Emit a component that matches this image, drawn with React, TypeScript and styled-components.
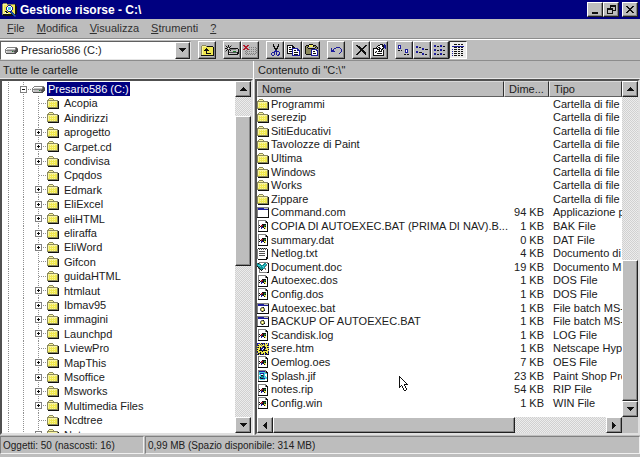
import React from 'react';
import styled, { createGlobalStyle, css } from 'styled-components';

const face = '#bdbdbd';
const navy = '#000080';
const ink = '#202020';

const GlobalStyle = createGlobalStyle`
  *, *::before, *::after { box-sizing: border-box; }
  html, body, #root { height: 100%; margin: 0; }
  body { background: ${face}; color: ${ink}; overflow: hidden; }
  body, button, select, table {
    font-family: "Liberation Sans", Arial, sans-serif;
    font-size: 11px;
    line-height: 13px;
  }
`;

const raised = css`
  border: 1px solid;
  border-color: #fff #202020 #202020 #fff;
  box-shadow: inset -1px -1px 0 #868686;
`;

const dither = css`
  background: repeating-conic-gradient(#d0d0d0 0 25%, #ececec 0 50%) 0 0 / 2px 2px;
`;

/* ---------- pixel icons ---------- */

const palette: Record<string, string> = {
  k: '#101010', g: '#808080', s: '#c0c0c0', w: '#ffffff', y: '#f0e850',
  o: '#8c8a5c', b: '#1c1c9c', r: '#b01c2c', t: '#109090', c: '#40d0e0',
  n: '#208030', l: '#f8f4a0', d: '#505050', e: '#e4e4e4',
};

const Glyph = styled.svg`
  display: block;
  flex: none;
`;

function Pixels({ rows }: { rows: string[] }) {
  const width = Math.max(...rows.map((r) => r.length));
  const cells: React.ReactNode[] = [];
  rows.forEach((row, y) => {
    let x = 0;
    while (x < row.length) {
      const ch = row[x];
      let end = x + 1;
      while (end < row.length && row[end] === ch) end++;
      if (palette[ch]) {
        cells.push(<rect key={`${x}-${y}`} x={x} y={y} width={end - x} height={1} fill={palette[ch]} />);
      }
      x = end;
    }
  });
  return (
    <Glyph width={width} height={rows.length} viewBox={`0 0 ${width} ${rows.length}`} shapeRendering="crispEdges" aria-hidden="true">
      {cells}
    </Glyph>
  );
}

const art = {
  folder: [
    '..oooo......',
    '.ollllo.....',
    'oooooooooog.',
    'olllllllllok',
    'olylylylyyok',
    'olyyyyyyyyok',
    'olylylylyyok',
    'olyyyyyyyyok',
    'oyylylylyyok',
    'oooooooooook',
    '.kkkkkkkkkkk',
  ],
  drive: [
    '..gggggggggg.',
    '.gwwwwwwwwgdg',
    'gwssssssssgdd',
    'ggggggggggddd',
    'gesssssngdddd',
    'gssssssssgdd.',
    '.dddddddddd..',
  ],
  com: [
    'gggggggggggg',
    'gbbbbbbssssk',
    'gbbbbbbbbbbk',
    'gwwwwwwwwwwk',
    'gwwwwwwwwwwk',
    'gwwwwwwwwwwk',
    'gwwwwwwwwwwk',
    'gwwwwwwwwwwk',
    'gwwwwwwwwwwk',
    'gwwwwwwwwwwk',
    'kkkkkkkkkkkk',
  ],
  bat: [
    'gggggggggggg',
    'gbbbbbbssssk',
    'gbbbbbbbbbbk',
    'gwwwwwwwwwwk',
    'gwwwgdkwwwwk',
    'gwwgoyogwwwk',
    'gwwdywydwwwk',
    'gwwgoyokwwwk',
    'gwwwgkgwwwwk',
    'gwwwwwwwwwwk',
    'kkkkkkkkkkkk',
  ],
  unknown: [
    '.gggggggg..',
    '.gwwwwwwgk.',
    '.gwwwwwwgkk',
    '.gwwwwwwwwk',
    '.gwwwkkkkwk',
    '.gkwrrknnwk',
    '.gwkrkknkwk',
    '.gkwbbkyywk',
    '.gwwbwwkywk',
    '.gwwwwwwwwk',
    '.gwwwwwwwwk',
    '.kkkkkkkkkk',
  ],
  text: [
    '.kgkgkgkgk.',
    'gwdwdwdwdwk',
    'gwwwwwwwwwk',
    'gwddddddwwk',
    'gwwwwwwwwwk',
    'gwddddddwwk',
    'gwwwwwwwwwk',
    'gwddddddwwk',
    'gwwwwwwwwwk',
    'gwwwwwwwwkk',
    'gwwwwwwwwkk',
    '.kkkkkkkkk.',
  ],
  word: [
    '..ggggggggg.',
    'tkgwwwwttwgk',
    'ttttwwttctwk',
    'tccttttctgwk',
    'kttctcctgwwk',
    '.kttttctwwwk',
    '.gkttttggwwk',
    '..gktkwwgwwk',
    '..gwkwwwwwwk',
    '..gwwwwwwwwk',
    '..ggggggggkk',
  ],
  html: [
    'bbbykbbkybyb',
    'byybykybyyyb',
    'bkyyoyyoyykb',
    'yyyyyokkyyyy',
    'bkykybbkkykb',
    'yyykbbwkbyyy',
    'kyykbwbkyyyk',
    'yykkkbkkkkyy',
    'kyyyykyyyyyb',
    'byykyyyykyyk',
    'ykbkyykybkyb',
    'bkykbkbykbkk',
  ],
  image: [
    '.gggggggg..',
    '.gbbbbbbgk.',
    '.gccccccgkk',
    '.gcbbbbccck',
    '.gccwwtcwwk',
    '.gwckktcwwk',
    '.gccttbccwk',
    '.gcktttccck',
    '.gcbkkbbcck',
    '.gwcccccwwk',
    '.gwwwwwwwwk',
    '.kkkkkkkkkk',
  ],
  app: [
    '.oooo..........',
    'ollllooooooook.',
    'olyyyybbbyyyyk.',
    'olyyybwwwbyyykk',
    'olyybwcccwbyykk',
    'olyybwcccwbyykk',
    'olyybwcccwbyykk',
    'olyyybwwwbyyykk',
    'olykkybbbbyyykk',
    'olywkkyybtbyykk',
    'ollllwyyybtbykk',
    'okkkkkkkkkbtbk.',
    '.kkkkkkkkkkbtb.',
    '............bb.',
  ],
  up: [
    '.oooo........',
    'ollllokkkkkk.',
    'olyyyyyyyyyyk',
    'olyyykyyyyyyk',
    'olyykkkyyyyyk',
    'olykkkkkyyyyk',
    'olyyykyyyyyyk',
    'olyyykyyyyyyk',
    'olyyykkkkkyyk',
    'olyyyyyyyyyyk',
    'kkkkkkkkkkkkk',
  ],
  map: [
    'g..k..g.......',
    '.k.k.k........',
    '..kgk.........',
    'kkgwgkkkkkkkk.',
    '..kgkggggggssk',
    '.k.k.ksssssssk',
    'g..kssssnnnssk',
    '...kddddddddkk',
    '...kwssssssskk',
    '...kkkkkkkkkk.',
  ],
  unmap: [
    'rr..rr........',
    '.rrrr.........',
    '..rr..g.g.g.g.',
    '.rrrr........g',
    'rr..rrg.g.g.g.',
    '...g.........g',
    '..g.g.g.g.g.g.',
    '...g.........g',
    '..g.g.g.g.g.g.',
    '...g.g.g.g.g..',
  ],
  cut: [
    '..k....k.',
    '..k....k.',
    '..kk..kk.',
    '...k..k..',
    '...kkkk..',
    '....kk...',
    '....bb...',
    '...bbbbb.',
    '.bbb.b..b',
    'b..b.b..b',
    'b..b.b.bb',
    '.bb...bb.',
  ],
  copy: [
    'kkkkkk.......',
    'kwwwwkk......',
    'kwkkwkkk.....',
    'kwwwwbbbbbb..',
    'kwkkkbwwwwbb.',
    'kwwwwbwkkwbbb',
    'kwkkkbwwwwwwb',
    'kwwwwbwkkkkwb',
    'kkkkkbwwwwwwb',
    '.....bwkkkkwb',
    '.....bbbbbbbb',
  ],
  paste: [
    '....kkkk.....',
    '.kkklyylkkk..',
    'kookyyyykook.',
    'kokssssssskok',
    'kookkkkkkkook',
    'kooooobbbbbb.',
    'kooooobwwwwbb',
    'kooooobwkkwwb',
    'kooooobwwwwwb',
    'kooooobwkkkwb',
    '.kkkkkbwwwwwb',
    '......bbbbbbb',
  ],
  undo: [
    '.....bbbb..',
    'b..bb....b.',
    'b.b.......b',
    'bbb.......b',
    'bbbb......b',
    '.........b.',
    '........b..',
  ],
  remove: [
    'kk.......kk',
    '.kkk....kk.',
    '..kkk..kk..',
    '...kkkkk...',
    '....kkk....',
    '....kkkk...',
    '...kk.kkk..',
    '..kk...kkk.',
    '.kk.....kk.',
    'kk.......k.',
  ],
  props: [
    '.......kkk.b.',
    '.....kkwwkkbb',
    '....kwwwwkkbb',
    '...kwkkwwwkbb',
    'kkkkkwkkwkk.b',
    'kwwwkkkwkk...',
    'kwwwwwkwkwk..',
    'kwskwkkkkwk..',
    'kwkswwwwwwk..',
    'kwwwkkkkkwk..',
    'kwwwwwwwwwk..',
    'kkkkkkkkkkk..',
  ],
  large: [
    'bbb.........',
    'bwb.........',
    'bwb.........',
    'bbb.........',
    '.......bbb..',
    'kk.k...bwb..',
    '.......bwb..',
    '.......bbb..',
    '............',
    '......kk.kk.',
  ],
  small: [
    'bb..........',
    'bb.kk.......',
    '......bb....',
    '......bb.kkk',
    '............',
    'bb..........',
    'bb.kkk......',
    '......bb....',
    '......bb.kk.',
  ],
  list: [
    'bb....bb....',
    'bb.kk.bb.kk.',
    '............',
    '............',
    'bb....bb....',
    'bb.kk.bb.kk.',
    '............',
    '............',
    'bb....bb....',
    'bb.kk.bb.kk.',
  ],
  details: [
    '..kkk.kk.kk.',
    '............',
    'bbbbbbbbbbbb',
    '..kkk.kk.kk.',
    '............',
    'b.kkk.kk.kk.',
    '............',
    'b.kkk.kk.kk.',
    '............',
    'b.kkk.kk.kk.',
    '............',
    'b.kkk.kk.kk.',
  ],
  arrowUp: ['...k...', '..kkk..', '.kkkkk.', 'kkkkkkk'],
  arrowDown: ['kkkkkkk', '.kkkkk.', '..kkk..', '...k...'],
  arrowLeft: ['...k', '..kk', '.kkk', 'kkkk', '.kkk', '..kk', '...k'],
  arrowRight: ['k...', 'kk..', 'kkk.', 'kkkk', 'kkk.', 'kk..', 'k...'],
  minimize: ['.......', '.......', '.......', '.......', '.......', '.......', 'kkkkkk.', 'kkkkkk.'],
  restore: [
    '...kkkkkk',
    '...kkkkkk',
    '...k....k',
    'kkkkkk..k',
    'kkkkkk..k',
    'k....kkkk',
    'k....k...',
    'k....k...',
    'kkkkkk...',
  ],
  close: ['kk....kk', '.kk..kk.', '..kkkk..', '...kk...', '..kkkk..', '.kk..kk.', 'kk....kk'],
  plus: [
    'ggggggg',
    'gwwwwwg',
    'gwwkwwg',
    'gwkkkwg',
    'gwwkwwg',
    'gwwwwwg',
    'ggggggg',
  ],
  minus: [
    'ggggggg',
    'gwwwwwg',
    'gwwwwwg',
    'gwkkkwg',
    'gwwwwwg',
    'gwwwwwg',
    'ggggggg',
  ],
  pointer: [
    'k........',
    'kk.......',
    'kwk......',
    'kwwk.....',
    'kwwwk....',
    'kwwwwk...',
    'kwwwwwk..',
    'kwwwwwwk.',
    'kwwwwkkkk',
    'kwkwwk...',
    'kk.kwwk..',
    'k..kwwk..',
    '....kwwk.',
    '....kwwk.',
    '.....kk..',
  ],
};

type IconName = keyof typeof art;
const Icon = ({ name }: { name: IconName }) => <Pixels rows={art[name]} />;

/* ---------- frame ---------- */

const Window = styled.div`
  display: flex;
  flex-direction: column;
  height: 100%;
  background: ${face};
`;

const TitleBar = styled.header`
  display: flex;
  align-items: center;
  height: 19px;
  padding: 0 2px;
  background: ${navy};
  color: #fff;
`;

const Title = styled.h1`
  flex: 1;
  margin: 0 0 0 3px;
  font-size: 12px;
  line-height: 16px;
  font-weight: 700;
`;

const CaptionButton = styled.button<{ $apart?: boolean }>`
  ${raised}
  display: grid;
  place-items: center;
  width: 16px;
  height: 15px;
  margin-left: ${(p) => (p.$apart ? 3 : 0)}px;
  padding: 0;
  background: ${face};
`;

const MenuBar = styled.nav`
  display: flex;
  align-items: center;
  gap: 12px;
  height: 20px;
  padding: 0 7px;
  border-bottom: 1px solid #8c8c8c;
`;

const MenuItem = styled.button`
  padding: 0;
  border: 0;
  background: none;
  color: #303030;
`;

const ToolBar = styled.div`
  display: flex;
  align-items: center;
  gap: 7px;
  height: 22px;
  border-top: 1px solid #fff;
  border-bottom: 1px solid #8c8c8c;
`;

const DriveBox = styled.label`
  display: flex;
  align-items: center;
  width: 191px;
  height: 19px;
  padding: 0 0 0 4px;
  background: #fff;
  border: 1px solid;
  border-color: #606060 #e4e4e4 #e4e4e4 #606060;
`;

const DriveSelect = styled.select`
  appearance: none;
  flex: 1;
  min-width: 0;
  padding: 0 0 0 3px;
  border: 0;
  outline: 0;
  background: transparent;
  color: ${ink};
`;

const DropArrow = styled.span`
  ${raised}
  display: grid;
  place-items: center;
  width: 15px;
  height: 17px;
  background: ${face};
`;

const ToolGroup = styled.div`
  display: flex;
`;

const ToolButton = styled.button<{ $pressed?: boolean }>`
  ${raised}
  display: grid;
  place-items: center;
  width: 18px;
  height: 18px;
  padding: 0;
  background: ${face};
  ${(p) =>
    p.$pressed &&
    css`
      border-color: #303030 #fff #fff #303030;
      box-shadow: none;
      background: #ededed;
    `}
`;

const Panes = styled.main`
  display: grid;
  grid-template-columns: 253px 2px minmax(0, 1fr);
  flex: 1;
  min-height: 0;
`;

const Pane = styled.section`
  display: flex;
  flex-direction: column;
  min-width: 0;
  min-height: 0;
`;

const PaneLabel = styled.h2`
  height: 18px;
  margin: 0;
  padding: 3px;
  border-bottom: 1px solid #e8e8e8;
  font-size: 11px;
  line-height: 13px;
  font-weight: 400;
`;

const Divider = styled.div`
  border-left: 1px solid #fff;
  background: ${face};
`;

const PaneBody = styled.div`
  display: flex;
  flex: 1;
  min-height: 0;
  background: #fff;
  border: 2px solid;
  border-color: #505050 #e0e0e0 #e0e0e0 #505050;
`;

/* ---------- scroll bars ---------- */

const Scroll = styled.div<{ $across?: boolean }>`
  ${dither}
  display: flex;
  flex: none;
  flex-direction: ${(p) => (p.$across ? 'row' : 'column')};
  ${(p) => (p.$across ? 'height: 16px;' : 'width: 16px;')}
`;

const ScrollButton = styled.button`
  ${raised}
  display: grid;
  place-items: center;
  flex: none;
  width: 16px;
  height: 16px;
  padding: 0;
  background: ${face};
`;

const Space = styled.div<{ $share: number }>`
  flex: ${(p) => p.$share} 1 0;
`;

const Thumb = styled(Space)`
  ${raised}
  background: ${face};
`;

function ScrollBar({ across, parts }: { across?: boolean; parts: [number, number, number] }) {
  const [before, size, after] = parts;
  return (
    <Scroll $across={across}>
      <ScrollButton aria-label={across ? 'Sinistra' : 'Su'}>
        <Icon name={across ? 'arrowLeft' : 'arrowUp'} />
      </ScrollButton>
      <Space $share={before} />
      <Thumb $share={size} />
      <Space $share={after} />
      <ScrollButton aria-label={across ? 'Destra' : 'Giù'}>
        <Icon name={across ? 'arrowRight' : 'arrowDown'} />
      </ScrollButton>
    </Scroll>
  );
}

/* ---------- folder tree ---------- */

const dotsDown = 'repeating-linear-gradient(#909090 0 1px, transparent 1px 2px)';
const dotsAcross = 'repeating-linear-gradient(90deg, #909090 0 1px, transparent 1px 2px)';

const Tree = styled.ul`
  flex: 1;
  min-width: 0;
  margin: 0;
  padding: 1px 0 0;
  overflow: hidden;
  list-style: none;
`;

const TreeRow = styled.li<{ $root?: boolean }>`
  display: flex;
  align-items: center;
  height: 14px;
  padding-left: ${(p) => (p.$root ? 18 : 33)}px;
  white-space: nowrap;
  background:
    ${dotsDown} 6px 0 / 1px 100% no-repeat,
    ${dotsDown} 21px 0 / 1px 100% no-repeat
    ${(p) => (p.$root ? '' : `, ${dotsDown} 36px 0 / 1px 100% no-repeat`)};
  &:nth-child(5n + 3), &:nth-child(5n + 5) { height: 15px; }
`;

const Branch = styled.span`
  display: flex;
  align-items: center;
  width: 12px;
  height: 7px;
  background: ${dotsAcross} 4px 3px / 8px 1px no-repeat;
`;

const TreeLabel = styled.span<{ $selected?: boolean }>`
  margin-left: ${(p) => (p.$selected ? 2 : 4)}px;
  padding: 0 1px;
  line-height: 14px;
  ${(p) => p.$selected && `background: ${navy}; color: #fff;`}
`;

const folders: [string, boolean][] = [
  ['Acopia', false], ['Aindirizzi', false], ['aprogetto', true], ['Carpet.cd', true],
  ['condivisa', true], ['Cpqdos', false], ['Edmark', true], ['EliExcel', true],
  ['eliHTML', true], ['eliraffa', true], ['EliWord', true], ['Gifcon', false],
  ['guidaHTML', false], ['htmlaut', true], ['Ibmav95', true], ['immagini', true],
  ['Launchpd', true], ['LviewPro', false], ['MapThis', true], ['Msoffice', true],
  ['Msworks', true], ['Multimedia Files', true], ['Ncdtree', false], ['Netscape', true],
];

/* ---------- file table ---------- */

const Listing = styled.div`
  position: relative;
  display: flex;
  flex: 1;
  flex-direction: column;
  min-width: 0;
`;

const TableArea = styled.div`
  flex: 1;
  min-height: 0;
  overflow: hidden;
`;

const Files = styled.table`
  width: 100%;
  table-layout: fixed;
  border-collapse: separate;
  border-spacing: 0;
`;

const NameCol = styled.col`width: auto;`;
const SizeCol = styled.col`width: 45px;`;
const TypeCol = styled.col`width: 73px;`;

const HeadCell = styled.th`
  height: 16px;
  padding: 0 4px;
  overflow: hidden;
  background: ${face};
  border: 1px solid;
  border-color: #d8d8d8 #303030 #606060 #e8e8e8;
  font-weight: 400;
  text-align: left;
  white-space: nowrap;
`;

const FileRow = styled.tr`
  height: 14px;
  &:nth-child(5n + 2), &:nth-child(5n + 4) { height: 13px; }
`;

const Cell = styled.td<{ $right?: boolean }>`
  padding: 0 ${(p) => (p.$right ? 5 : 0)}px 0 ${(p) => (p.$right ? 0 : 4)}px;
  overflow: hidden;
  text-align: ${(p) => (p.$right ? 'right' : 'left')};
  vertical-align: middle;
  white-space: nowrap;
`;

const NameCell = styled(Cell)`
  padding: 0;
  overflow: visible;
`;

const FileName = styled.span`
  display: flex;
  align-items: center;
  gap: 2px;
  height: 13px;
`;

const IconSlot = styled.span`
  flex: none;
  width: 12px;
`;

const Corner = styled.div`
  width: 16px;
  height: 16px;
  background: ${face};
`;

const Side = styled.div`
  display: flex;
  flex-direction: column;
  flex: none;
  & > :first-child { flex: 1; }
`;

const Pointer = styled.div`
  position: absolute;
  left: 142px;
  top: 295px;
`;

const files: [IconName, string, string, string][] = [
  ['folder', 'Programmi', '', 'Cartella di file'],
  ['folder', 'serezip', '', 'Cartella di file'],
  ['folder', 'SitiEducativi', '', 'Cartella di file'],
  ['folder', 'Tavolozze di Paint', '', 'Cartella di file'],
  ['folder', 'Ultima', '', 'Cartella di file'],
  ['folder', 'Windows', '', 'Cartella di file'],
  ['folder', 'Works', '', 'Cartella di file'],
  ['folder', 'Zippare', '', 'Cartella di file'],
  ['com', 'Command.com', '94 KB', 'Applicazione p'],
  ['unknown', 'COPIA DI AUTOEXEC.BAT (PRIMA DI NAV).B...', '1 KB', 'BAK File'],
  ['unknown', 'summary.dat', '0 KB', 'DAT File'],
  ['text', 'Netlog.txt', '4 KB', 'Documento di'],
  ['word', 'Document.doc', '19 KB', 'Documento Mi'],
  ['unknown', 'Autoexec.dos', '1 KB', 'DOS File'],
  ['unknown', 'Config.dos', '1 KB', 'DOS File'],
  ['bat', 'Autoexec.bat', '1 KB', 'File batch MS-'],
  ['bat', 'BACKUP OF AUTOEXEC.BAT', '1 KB', 'File batch MS-'],
  ['unknown', 'Scandisk.log', '1 KB', 'LOG File'],
  ['html', 'sere.htm', '1 KB', 'Netscape Hyp'],
  ['unknown', 'Oemlog.oes', '7 KB', 'OES File'],
  ['image', 'Splash.jif', '23 KB', 'Paint Shop Pro'],
  ['unknown', 'notes.rip', '54 KB', 'RIP File'],
  ['unknown', 'Config.win', '1 KB', 'WIN File'],
];

/* ---------- status bar ---------- */

const StatusBar = styled.footer`
  display: grid;
  grid-template-columns: 144px minmax(0, 1fr);
  gap: 1px;
  padding: 1px 0 3px;
`;

const StatusField = styled.div`
  height: 18px;
  padding: 2px;
  border: 1px solid;
  border-color: #808080 #f0f0f0 #f0f0f0 #808080;
  font-size: 10px;
  line-height: 13px;
  white-space: nowrap;
`;

const menus = ['File', 'Modifica', 'Visualizza', 'Strumenti', '?'];

const tools: [IconName, string][][] = [
  [['up', 'Livello superiore']],
  [['map', 'Connetti unità di rete'], ['unmap', 'Disconnetti unità di rete']],
  [['cut', 'Taglia'], ['copy', 'Copia'], ['paste', 'Incolla']],
  [['undo', 'Annulla']],
  [['remove', 'Elimina'], ['props', 'Proprietà']],
  [['large', 'Icone grandi'], ['small', 'Icone piccole'], ['list', 'Elenco'], ['details', 'Dettagli']],
];

export default function App() {
  return (
    <Window>
      <GlobalStyle />
      <TitleBar>
        <Icon name="app" />
        <Title>Gestione risorse - C:\</Title>
        <CaptionButton aria-label="Riduci a icona"><Icon name="minimize" /></CaptionButton>
        <CaptionButton aria-label="Ripristina"><Icon name="restore" /></CaptionButton>
        <CaptionButton aria-label="Chiudi" $apart><Icon name="close" /></CaptionButton>
      </TitleBar>
      <MenuBar>
        {menus.map((m) => (
          <MenuItem key={m}><u>{m[0]}</u>{m.slice(1)}</MenuItem>
        ))}
      </MenuBar>
      <ToolBar>
        <DriveBox>
          <Icon name="drive" />
          <DriveSelect aria-label="Unità" defaultValue="c">
            <option value="c">Presario586 (C:)</option>
          </DriveSelect>
          <DropArrow><Icon name="arrowDown" /></DropArrow>
        </DriveBox>
        {tools.map((group) => (
          <ToolGroup key={group[0][0]}>
            {group.map(([name, label]) => (
              <ToolButton key={name} aria-label={label} $pressed={name === 'details'}>
                <Icon name={name} />
              </ToolButton>
            ))}
          </ToolGroup>
        ))}
      </ToolBar>
      <Panes>
        <Pane>
          <PaneLabel>Tutte le cartelle</PaneLabel>
          <PaneBody>
            <Tree>
              <TreeRow $root>
                <Branch><Icon name="minus" /></Branch>
                <Icon name="drive" />
                <TreeLabel $selected>Presario586 (C:)</TreeLabel>
              </TreeRow>
              {folders.map(([name, more]) => (
                <TreeRow key={name}>
                  <Branch>{more && <Icon name="plus" />}</Branch>
                  <Icon name="folder" />
                  <TreeLabel>{name}</TreeLabel>
                </TreeRow>
              ))}
            </Tree>
            <ScrollBar parts={[19, 149, 152]} />
          </PaneBody>
        </Pane>
        <Divider />
        <Pane>
          <PaneLabel>Contenuto di "C:\"</PaneLabel>
          <PaneBody>
            <Listing>
              <TableArea>
                <Files>
                  <colgroup><NameCol /><SizeCol /><TypeCol /></colgroup>
                  <thead>
                    <tr>
                      <HeadCell scope="col">Nome</HeadCell>
                      <HeadCell scope="col">Dime...</HeadCell>
                      <HeadCell scope="col">Tipo</HeadCell>
                    </tr>
                  </thead>
                  <tbody>
                    {files.map(([icon, name, size, type]) => (
                      <FileRow key={name}>
                        <NameCell>
                          <FileName><IconSlot><Icon name={icon} /></IconSlot>{name}</FileName>
                        </NameCell>
                        <Cell $right>{size}</Cell>
                        <Cell>{type}</Cell>
                      </FileRow>
                    ))}
                  </tbody>
                </Files>
              </TableArea>
              <ScrollBar across parts={[0, 243, 92]} />
              <Pointer><Icon name="pointer" /></Pointer>
            </Listing>
            <Side>
              <ScrollBar parts={[164, 139, 0]} />
              <Corner />
            </Side>
          </PaneBody>
        </Pane>
      </Panes>
      <StatusBar>
        <StatusField>Oggetti: 50 (nascosti: 16)</StatusField>
        <StatusField>0,99 MB (Spazio disponibile: 314 MB)</StatusField>
      </StatusBar>
    </Window>
  );
}
